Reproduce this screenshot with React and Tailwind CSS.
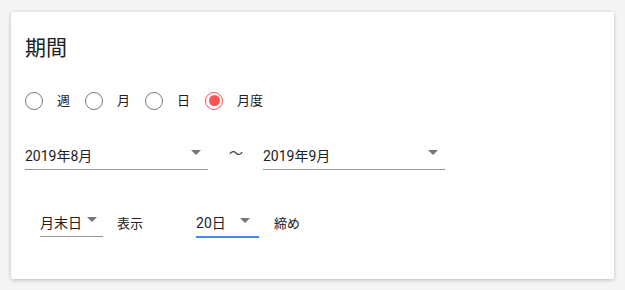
import React from 'react';

const font = { fontFamily: 'Roboto, "Noto Sans CJK JP", sans-serif' };

const Arrow = ({ className = '' }) => (
  <svg className={className} width="10" height="5" viewBox="0 0 10 5">
    <path d="M0 0 L10 0 L5 5 Z" fill="#757575" />
  </svg>
);

const Radio = ({ label, checked }) => (
  <label className="flex items-center mr-[15px]">
    {checked ? (
      <span className="w-[18px] h-[18px] rounded-full border-[1.5px] border-[#ff5252] flex items-center justify-center">
        <span className="w-[11px] h-[11px] rounded-full bg-[#ff5252]" />
      </span>
    ) : (
      <span className="w-[18px] h-[18px] rounded-full border-[1.5px] border-[#7a7a7a]" />
    )}
    <span className="ml-[14px] text-[13px] text-[#212121]">{label}</span>
  </label>
);

const Select = ({ value, width, active, arrowRight = 'right-[7px]' }) => (
  <div
    className={`relative flex items-end pb-[6px] h-[24px] ${
      active ? 'border-b-2 border-[#4285f4]' : 'border-b border-[#949494]'
    }`}
    style={{ width }}
  >
    <span className="text-[14px] leading-none text-[#212121]">{value}</span>
    <Arrow className={`absolute ${arrowRight} top-[4px]`} />
  </div>
);

export default function App() {
  return (
    <div className="min-h-[290px] bg-[#f5f5f5] pt-[12px] pl-[11px]" style={font}>
      <div className="w-[603px] h-[267px] bg-white rounded-[2px] shadow-[0_1px_4px_rgba(0,0,0,0.25)] pl-[14px] pt-[26px]">
        <h2 className="text-[21px] leading-none text-[#212121]">期間</h2>

        <div className="flex items-center mt-[32px]">
          <Radio label="週" />
          <Radio label="月" />
          <Radio label="日" />
          <Radio label="月度" checked />
        </div>

        <div className="flex items-end mt-[32px]">
          <Select value="2019年8月" width={183} />
          <span className="ml-[21px] mr-[20px] mb-[6px] text-[14px] text-[#424242]">〜</span>
          <Select value="2019年9月" width={182} />
        </div>

        <div className="flex items-end mt-[43px] pl-[15px]">
          <Select value="月末日" width={63} arrowRight="right-[6px]" />
          <span className="ml-[14px] mb-[3px] text-[13px] text-[#212121]">表示</span>
          <div className="ml-[53px] mb-[-1px]">
            <Select value="20日" width={63} arrowRight="right-[9px]" active />
          </div>
          <span className="ml-[15px] mb-[3px] text-[13px] text-[#212121]">締め</span>
        </div>
      </div>
    </div>
  );
}
